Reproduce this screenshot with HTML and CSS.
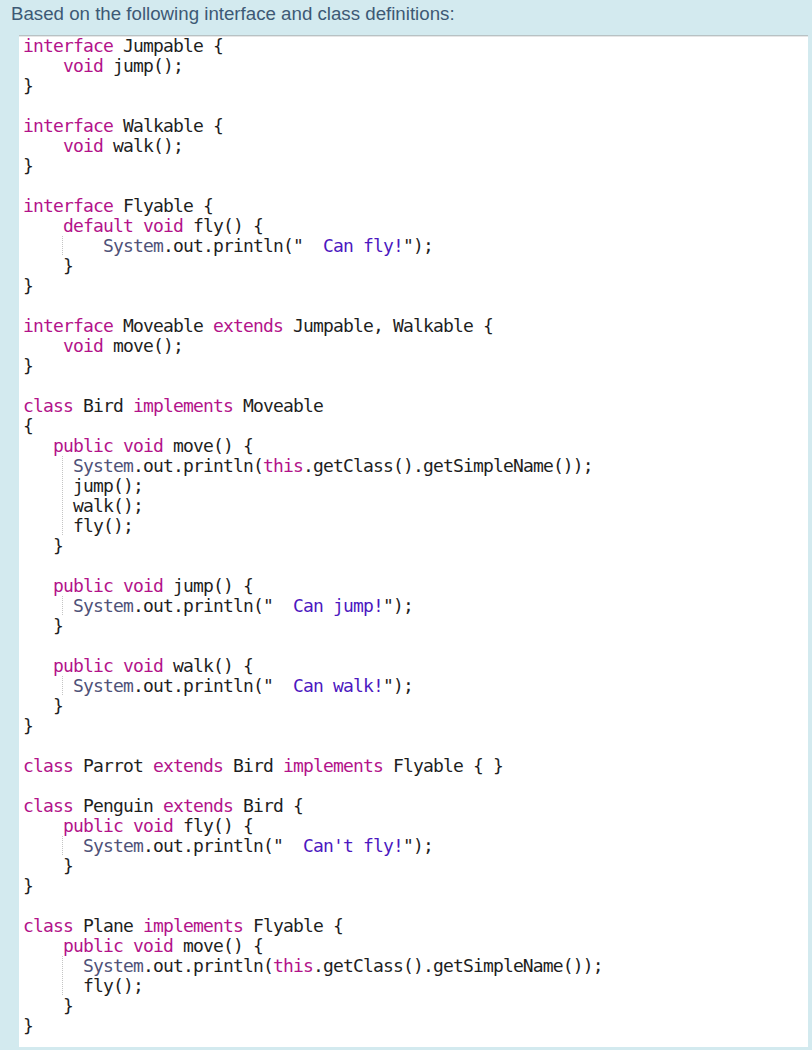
FILE: index.html
```html
<!DOCTYPE html>
<html>
<head>
<meta charset="utf-8">
<link rel="stylesheet" href="styles.css">
</head>
<body>
<div class="title">Based on the following interface and class definitions:</div>
<div class="code">
<div class="ln"><span class="k">interface</span> Jumpable {</div>
<div class="ln">    <span class="k">void</span> jump();</div>
<div class="ln">}</div>
<div class="ln"> </div>
<div class="ln"><span class="k">interface</span> Walkable {</div>
<div class="ln">    <span class="k">void</span> walk();</div>
<div class="ln">}</div>
<div class="ln"> </div>
<div class="ln"><span class="k">interface</span> Flyable {</div>
<div class="ln">    <span class="k">default</span> <span class="k">void</span> fly() {</div>
<div class="ln g">        <span class="t">System</span>.out.println(" <span class="s"> Can fly!</span>");</div>
<div class="ln">    }</div>
<div class="ln">}</div>
<div class="ln"> </div>
<div class="ln"><span class="k">interface</span> Moveable <span class="k">extends</span> Jumpable, Walkable {</div>
<div class="ln">    <span class="k">void</span> move();</div>
<div class="ln">}</div>
<div class="ln"> </div>
<div class="ln"><span class="k">class</span> Bird <span class="k">implements</span> Moveable</div>
<div class="ln">{</div>
<div class="ln">   <span class="k">public</span> <span class="k">void</span> move() {</div>
<div class="ln g">     <span class="t">System</span>.out.println(<span class="k">this</span>.getClass().getSimpleName());</div>
<div class="ln g">     jump();</div>
<div class="ln g">     walk();</div>
<div class="ln g">     fly();</div>
<div class="ln">   }</div>
<div class="ln"> </div>
<div class="ln">   <span class="k">public</span> <span class="k">void</span> jump() {</div>
<div class="ln g">     <span class="t">System</span>.out.println(" <span class="s"> Can jump!</span>");</div>
<div class="ln">   }</div>
<div class="ln"> </div>
<div class="ln">   <span class="k">public</span> <span class="k">void</span> walk() {</div>
<div class="ln g">     <span class="t">System</span>.out.println(" <span class="s"> Can walk!</span>");</div>
<div class="ln">   }</div>
<div class="ln">}</div>
<div class="ln"> </div>
<div class="ln"><span class="k">class</span> Parrot <span class="k">extends</span> Bird <span class="k">implements</span> Flyable { }</div>
<div class="ln"> </div>
<div class="ln"><span class="k">class</span> Penguin <span class="k">extends</span> Bird {</div>
<div class="ln">    <span class="k">public</span> <span class="k">void</span> fly() {</div>
<div class="ln g">      <span class="t">System</span>.out.println(" <span class="s"> Can't fly!</span>");</div>
<div class="ln">    }</div>
<div class="ln">}</div>
<div class="ln"> </div>
<div class="ln"><span class="k">class</span> Plane <span class="k">implements</span> Flyable {</div>
<div class="ln">    <span class="k">public</span> <span class="k">void</span> move() {</div>
<div class="ln g">      <span class="t">System</span>.out.println(<span class="k">this</span>.getClass().getSimpleName());</div>
<div class="ln g">      fly();</div>
<div class="ln">    }</div>
<div class="ln">}</div>
</div>
</body>
</html>
```
FILE: styles.css
```css
html, body {
  margin: 0;
  padding: 0;
  background: #d3eaef;
}
body {
  width: 812px;
  height: 1050px;
  overflow: hidden;
}
.title {
  font-family: "Liberation Sans", Arial, sans-serif;
  font-size: 18.7px;
  line-height: 28px;
  color: #3d5975;
  padding-left: 11px;
}
.code {
  margin: 7px 0 0 19px;
  width: 785px;
  height: 1011px;
  background: #fff;
  border-top: 1px solid #b8c2c4;
  box-shadow: inset 0 1px 0 #e6e6e6;
  padding-left: 4px;
  font-family: "DejaVu Sans Mono", "Liberation Mono", monospace;
  font-size: 18px;
  letter-spacing: -0.84px;
  color: #1e1e1e;
}
.ln {
  height: 20px;
  line-height: 20px;
  white-space: pre;
}
.g {
  background-image: repeating-linear-gradient(to bottom, #c4c4c4 0 1px, transparent 1px 2px);
  background-size: 1px 100%;
  background-position: 39px 0;
  background-repeat: no-repeat;
}
.k { color: #b3138a; }
.s { color: #4c18c0; }
.t { color: #4f5278; }
```
